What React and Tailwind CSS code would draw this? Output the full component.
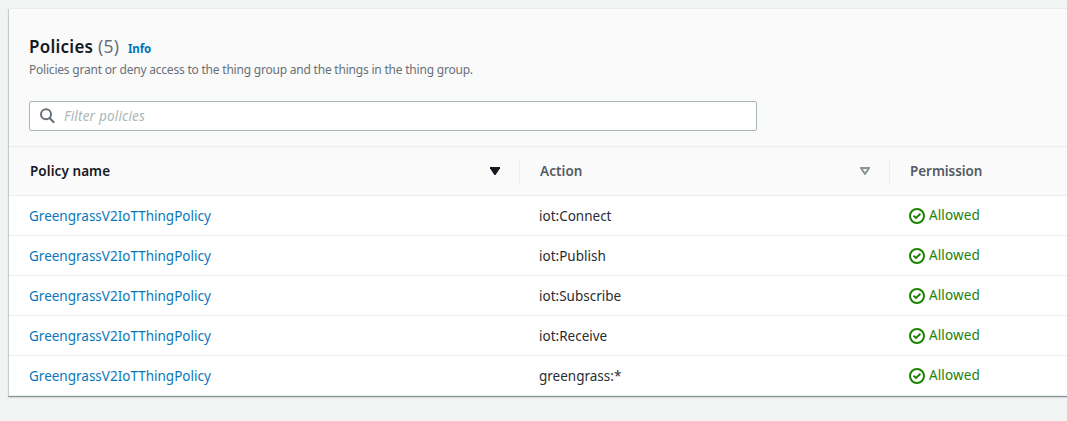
const rows = ["iot:Connect", "iot:Publish", "iot:Subscribe", "iot:Receive", "greengrass:*"];

function SearchIcon() {
  return (
    <svg className="h-4 w-4 shrink-0" viewBox="0 0 16 16" fill="none" stroke="#687078" strokeWidth="2">
      <circle cx="6" cy="6.3" r="5" />
      <path d="M9.6 10 14.2 14.7" />
    </svg>
  );
}

function CheckIcon() {
  return (
    <svg className="h-4 w-4 shrink-0" viewBox="0 0 16 16" fill="none" stroke="#1d8102" strokeWidth="2">
      <circle cx="8" cy="8" r="7" />
      <path d="M4.5 7.8 7 10 11.4 5.7" />
    </svg>
  );
}

function SortIcon({ active }) {
  return (
    <svg className="h-2 w-2.5 shrink-0" viewBox="0 0 10 8">
      {active ? (
        <path d="M0 0H10V1.2L5.6 8H4.4L0 1.2Z" fill="#16191f" />
      ) : (
        <path d="M1 1H9L5 7Z" fill="none" stroke="#879596" strokeWidth="2" />
      )}
    </svg>
  );
}

export default function App() {
  return (
    <div className="h-[421px] w-full overflow-hidden bg-[#f2f3f3] pt-[9px] pl-2 font-['Noto_Sans',sans-serif] text-[13.5px] text-[#16191f]">
      <section className="h-[388px] w-[1080px] border-b border-l border-b-[#879596] border-l-[#c5caca] bg-white shadow-[0_-1px_0_#eaeded,0_1px_1px_#d5dbdb]">
        <header className="h-[137px] bg-[#fafafa] pt-[25px] pl-5">
          <div className="flex h-6 items-baseline leading-6 whitespace-nowrap">
            <h2 className="w-[69px] text-[17px] font-semibold tracking-[0.25px]">Policies</h2>
            <span className="w-[30px] text-[17.5px] tracking-[0.3px] text-[#687078]">(5)</span>
            <a className="text-[11.5px] font-bold tracking-[-0.1px] text-[#0073bb]">Info</a>
          </div>
          <p className="h-5 pt-px text-xs leading-[21px] tracking-[-0.21px] text-[#687078]">
            Policies grant or deny access to the thing group and the things in the thing group.
          </p>
          <div className="mt-[23px] flex h-[30px] w-[728px] items-center rounded-xs border border-[#aab7b8] bg-white pl-2.5">
            <SearchIcon />
            <span className="ml-2 leading-5 tracking-[0.2px] text-[#aab7b8] italic">Filter policies</span>
          </div>
        </header>
        <div className="flex h-[50px] items-center border-y border-[#eaeded] bg-[#fafafa] font-semibold">
          <div className="flex h-6 w-[511px] items-center justify-between border-r border-[#eaeded] pr-[19px] pl-[21px]">
            <span className="tracking-[0.07px]">Policy name</span>
            <SortIcon active />
          </div>
          <div className="flex h-6 w-[370px] items-center justify-between border-r border-[#eaeded] pr-[19px] pl-5 text-[#545b64]">
            <span className="tracking-[0.07px]">Action</span>
            <SortIcon />
          </div>
          <span className="pl-5 tracking-[-0.05px] text-[#545b64]">Permission</span>
        </div>
        {rows.map((action, i) => (
          <div key={i} className="flex h-10 items-center border-b border-[#eaeded]">
            <a className="w-[510px] pt-0.5 pl-5 text-[#0878bd]">GreengrassV2IoTThingPolicy</a>
            <span className="w-[370px] pt-0.5 pl-5 text-[#2a2d33]">{action}</span>
            <span className="flex items-center gap-1 pl-5 text-[#1d8102]">
              <CheckIcon />
              <span className="tracking-[0.12px]">Allowed</span>
            </span>
          </div>
        ))}
      </section>
    </div>
  );
}
